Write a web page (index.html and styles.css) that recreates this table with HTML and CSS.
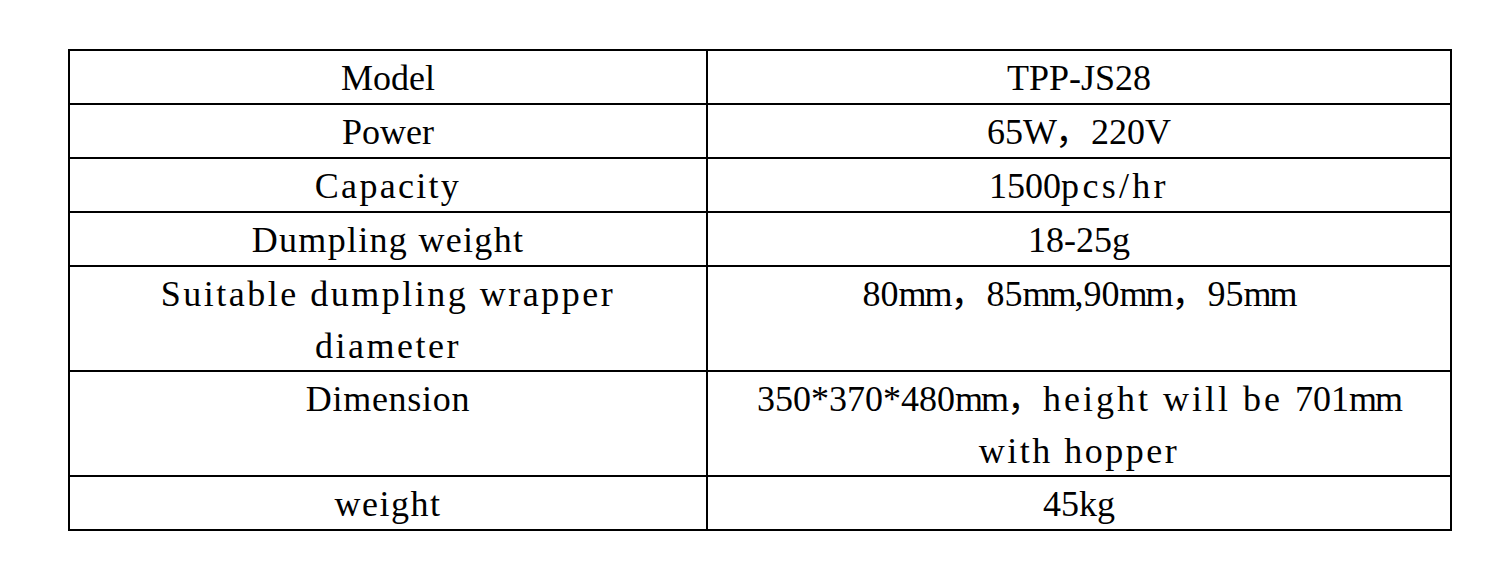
FILE: index.html
```html
<!DOCTYPE html>
<html lang="en">
<head>
<meta charset="utf-8">
<title>Specifications</title>
<link rel="stylesheet" href="styles.css">
</head>
<body>
<div class="spec">
  <div class="cell"><span class="m">Model</span></div>
  <div class="cell">TPP-JS28</div>

  <div class="cell"><span class="m">Power</span></div>
  <div class="cell">65<span class="n">W</span><span class="fw">，</span>220V</div>

  <div class="cell"><span class="m s23">Capacity</span></div>
  <div class="cell">1500<span class="m s33">pcs/hr</span></div>

  <div class="cell"><span class="m s13">Dumpling weight</span></div>
  <div class="cell">18-25<span class="m">g</span></div>

  <div class="cell tall"><span class="m s25">Suitable dumpling wrapper<br>diameter</span></div>
  <div class="cell tall">80<span class="n">mm</span><span class="fw">，</span>85<span class="n">mm</span>,90<span class="n">mm</span><span class="fw">，</span>95<span class="n">mm</span></div>

  <div class="cell tall"><span class="m s07">Dimension</span></div>
  <div class="cell tall">350*370*480<span class="n">mm</span><span class="fw">，</span><span class="m s30">height will be </span>701<span class="n">mm</span><br><span class="m s25">with hopper</span></div>

  <div class="cell"><span class="m s15">weight</span></div>
  <div class="cell">45kg</div>
</div>
</body>
</html>
```
FILE: styles.css
```css
html, body {
  margin: 0;
  padding: 0;
  background: #ffffff;
}

body {
  color: #000000;
}

.spec {
  box-sizing: border-box;
  width: 1384px;
  margin: 49px 0 0 68px;
  padding: 2px;
  background: #000000;
  display: grid;
  grid-template-columns: 636px 742px;
  grid-template-rows: 52px 52px 52px 52px 103px 103px 52px;
  gap: 2px;
}

.cell {
  background: #ffffff;
  font-family: "Liberation Serif", "Times New Roman", serif;
  font-size: 36px;
  line-height: 52px;
  padding-top: 1px;
  text-align: center;
  white-space: nowrap;
  color: #000000;
}

/* full-width comma: one em wide, glyph sits at the left */
.fw {
  line-height: 1;
  font-family: "Noto Sans CJK SC", sans-serif;
}

/* narrow half-width letters */
.n {
  letter-spacing: -2px;
}

/* half-width letter runs, spaced out to approximate fixed cells */
.m { letter-spacing: 0; }
.m.s07 { letter-spacing: 0.7px; }
.m.s13 { letter-spacing: 1.3px; }
.m.s15 { letter-spacing: 1.5px; }
.m.s23 { letter-spacing: 2.3px; }
.m.s25 { letter-spacing: 2.5px; }
.m.s30 { letter-spacing: 3px; }
.m.s33 { letter-spacing: 3.3px; }
```
